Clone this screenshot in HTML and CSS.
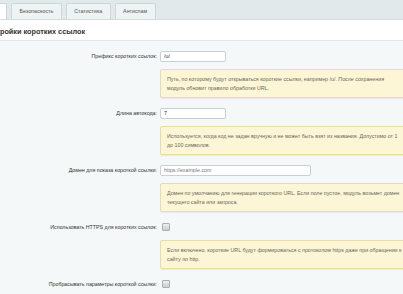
FILE: index.html
```html
<!DOCTYPE html>
<html lang="ru">
<head>
    <meta charset="UTF-8">
    <meta name="viewport" content="width=device-width, initial-scale=1.0">
    <title>Настройки коротких ссылок</title>
    <link rel="stylesheet" href="styles.css">
</head>
<body>
    <div class="tabs">
        <span class="tab tab-active">Настройки</span>
        <span class="tab">Безопасность</span>
        <span class="tab">Статистика</span>
        <span class="tab">Антиспам</span>
    </div>
    <div class="title">Настройки коротких ссылок</div>

    <div class="form">
        <div class="row">
            <label class="label" for="prefix">Префикс коротких ссылок:</label>
            <div class="field"><input type="text" id="prefix" class="input input-short" value="/u/"></div>
        </div>
        <div class="row">
            <div class="label"></div>
            <div class="note">Путь, по которому будут открываться короткие ссылки, например /u/. После сохранения<br>модуль обновит правило обработки URL.</div>
        </div>

        <div class="row">
            <label class="label" for="length">Длина автокода:</label>
            <div class="field"><input type="text" id="length" class="input input-short" value="7"></div>
        </div>
        <div class="row">
            <div class="label"></div>
            <div class="note">Используется, когда код не задан вручную и не может быть взят из названия. Допустимо от 1<br>до 100 символов.</div>
        </div>

        <div class="row">
            <label class="label" for="domain">Домен для показа короткой ссылки:</label>
            <div class="field"><input type="text" id="domain" class="input input-long" placeholder="https://example.com"></div>
        </div>
        <div class="row">
            <div class="label"></div>
            <div class="note">Домен по умолчанию для генерации короткого URL. Если поле пустое, модуль возьмет домен<br>текущего сайта или запроса.</div>
        </div>

        <div class="row">
            <label class="label" for="https">Использовать HTTPS для коротких ссылок:</label>
            <div class="field"><span class="check" id="https"></span></div>
        </div>
        <div class="row">
            <div class="label"></div>
            <div class="note">Если включено, короткие URL будут формироваться с протоколом https даже при обращении к<br>сайту по http.</div>
        </div>

        <div class="row">
            <label class="label" for="params">Пробрасывать параметры короткой ссылки:</label>
            <div class="field"><span class="check" id="params"></span></div>
        </div>
    </div>
</body>
</html>
```

FILE: styles.css
```css
body {
    margin: 0;
    font-family: 'Liberation Sans', Arial, sans-serif;
    font-size: 5.3px;
    color: #333;
    background-color: #f5f8f9;
    overflow: hidden;
}
.tabs {
    display: flex;
    align-items: flex-end;
    gap: 4px;
    height: 19px;
    margin-left: -36px;
    background-color: #e1e9eb;
    border-bottom: 1px solid #d3dcde;
}
.tab {
    display: block;
    height: 15px;
    line-height: 15px;
    padding: 0 7.5px;
    color: #555;
    background-color: #eef3f4;
    border: 1px solid #cdd6d8;
    border-bottom: none;
    border-radius: 2px 2px 0 0;
}
.tab-active {
    background-color: #fff;
}
.title {
    height: 20px;
    line-height: 23px;
    text-indent: -17px;
    font-size: 7.3px;
    font-weight: bold;
    color: #333;
    background-color: #fff;
    border-bottom: 1px solid #e2e8e9;
}
.form {
    padding-top: 6px;
}
.row {
    display: grid;
    grid-template-columns: 157px 1fr;
    column-gap: 3px;
    align-items: center;
}
.label {
    text-align: right;
    height: 18px;
    line-height: 18px;
}
.field {
    display: flex;
    align-items: center;
}
.input {
    box-sizing: border-box;
    height: 11px;
    padding: 0 3px;
    font-family: inherit;
    font-size: 5.3px;
    color: #333;
    background-color: #fff;
    border: 1px solid #c9d0d2;
    border-radius: 2px;
}
.input::placeholder {
    color: #777;
}
.input-short {
    width: 66px;
}
.input-long {
    width: 151px;
}
.check {
    display: block;
    width: 6px;
    height: 6px;
    margin-left: 2px;
    border: 1px solid #a9b0b3;
    border-radius: 1px;
    background: linear-gradient(#f0f0f0, #c9cccd);
}
.note {
    box-sizing: border-box;
    width: 260px;
    margin: 4px 0 6px;
    padding: 5px 6px;
    line-height: 8.5px;
    color: #6b6658;
    background-color: #fdf6d6;
    border: 1px solid #e9dda6;
    border-radius: 2px;
    box-shadow: 0 1px 1px rgba(0,0,0,0.06);
    white-space: nowrap;
}
```
